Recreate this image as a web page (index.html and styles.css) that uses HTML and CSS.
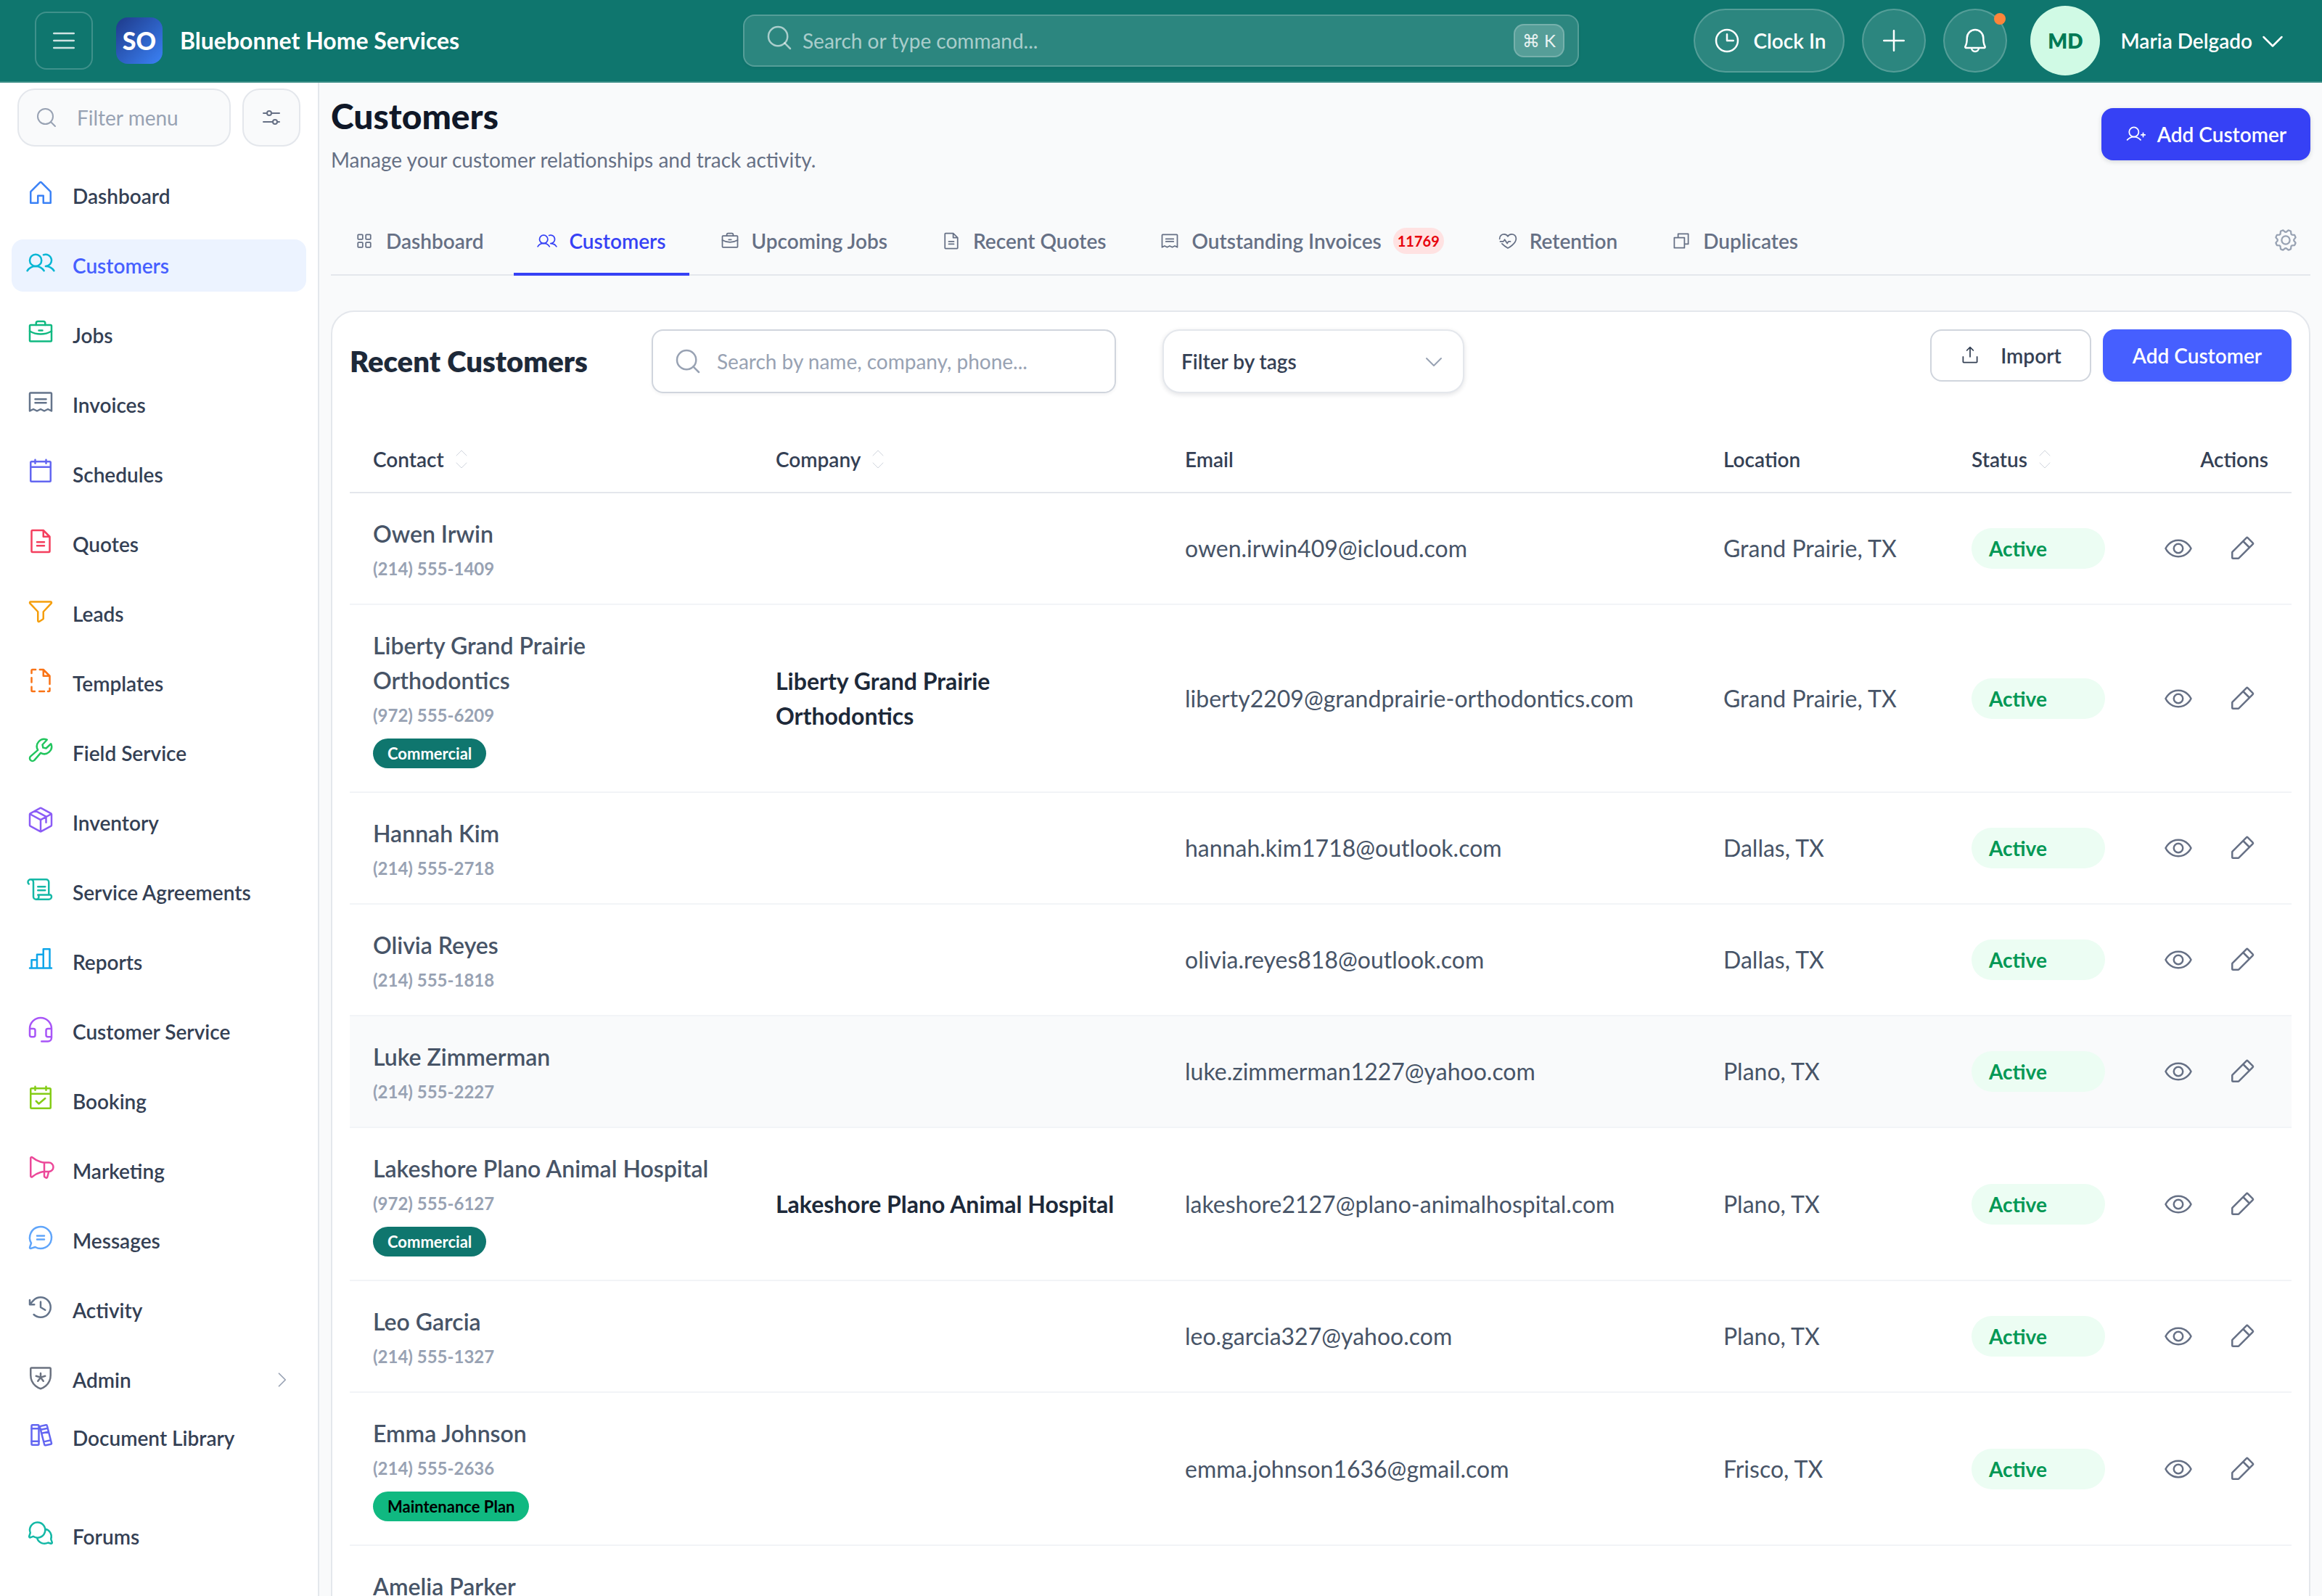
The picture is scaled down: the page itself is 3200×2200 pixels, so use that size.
FILE: index.html
```html
<!DOCTYPE html>
<html lang="en">
<head>
<meta charset="utf-8">
<meta name="viewport" content="width=device-width, initial-scale=1">
<title>Customers</title>
<link rel="stylesheet" href="styles.css">
</head>
<body>
<svg class="sprite" aria-hidden="true">
  <symbol id="list" viewBox="0 0 256 256"><path d="M40,64H216M40,128H216M40,192H216"/></symbol>
  <symbol id="search" viewBox="0 0 256 256"><circle cx="116" cy="116" r="84"/><path d="M175.4,175.4L224,224"/></symbol>
  <symbol id="clock" viewBox="0 0 256 256"><circle cx="128" cy="128" r="96"/><path d="M128,72V128H184"/></symbol>
  <symbol id="plus" viewBox="0 0 256 256"><path d="M40,128H216M128,40V216"/></symbol>
  <symbol id="bell" viewBox="0 0 256 256"><path d="M96,192a32,32,0,0,0,64,0M56,104a72,72,0,0,1,144,0c0,35.82,8.3,64.6,14.9,76A8,8,0,0,1,208,192H48a8,8,0,0,1-6.88-12C47.71,168.6,56,139.81,56,104Z"/></symbol>
  <symbol id="caret-down" viewBox="0 0 256 256"><path d="M208,96L128,176L48,96"/></symbol>
  <symbol id="caret-right" viewBox="0 0 256 256"><path d="M96,48L176,128L96,208"/></symbol>
  <symbol id="sliders" viewBox="0 0 256 256"><circle cx="104" cy="80" r="24"/><circle cx="168" cy="176" r="24"/><path d="M128,80H216M40,80H80M192,176H216M40,176H144"/></symbol>
  <symbol id="house" viewBox="0 0 256 256"><path d="M104,216V152h48v64h64V120a8,8,0,0,0-2.34-5.66l-80-80a8,8,0,0,0-11.32,0l-80,80A8,8,0,0,0,40,120v96Z"/></symbol>
  <symbol id="users" viewBox="0 0 256 256"><circle cx="84" cy="108" r="52"/><path d="M10.23,200a88,88,0,0,1,147.54,0M172,160a87.93,87.93,0,0,1,73.77,40M152.69,59.7A52,52,0,1,1,172,160"/></symbol>
  <symbol id="briefcase" viewBox="0 0 256 256"><rect x="32" y="64" width="192" height="144" rx="8"/><path d="M168,64V48a16,16,0,0,0-16-16H104A16,16,0,0,0,88,48V64M224,118.31A191.09,191.09,0,0,1,128,144a191.14,191.14,0,0,1-96-25.68M112,112h32"/></symbol>
  <symbol id="receipt" viewBox="0 0 256 256"><path d="M32,208V56a8,8,0,0,1,8-8H216a8,8,0,0,1,8,8V208l-32-16-32,16-32-16L96,208,64,192ZM80,104H176M80,136H176"/></symbol>
  <symbol id="calendar" viewBox="0 0 256 256"><rect x="40" y="40" width="176" height="176" rx="8"/><path d="M176,24V56M80,24V56M40,88H216"/></symbol>
  <symbol id="file-text" viewBox="0 0 256 256"><path d="M200,224H56a8,8,0,0,1-8-8V40a8,8,0,0,1,8-8h96l56,56V216A8,8,0,0,1,200,224ZM152,32V88H208M96,136H160M96,168H160"/></symbol>
  <symbol id="funnel" viewBox="0 0 256 256"><path d="M34.1,61.38A8,8,0,0,1,40,48H216a8,8,0,0,1,5.92,13.38L152,136v58.65a8,8,0,0,1-3.56,6.66l-32,21.33A8,8,0,0,1,104,216V136Z"/></symbol>
  <symbol id="file-dashed" viewBox="0 0 256 256"><path d="M84,32H56a8,8,0,0,0-8,8V64M48,104V144M48,184v32a8,8,0,0,0,8,8H76M116,224H160M192,224h8a8,8,0,0,0,8-8V196M208,160V88L152,32H120M152,32V88H208"/></symbol>
  <symbol id="wrench" viewBox="0 0 256 256"><path d="M219.3,72a64,64,0,0,1-90.6,80.6L73,217a24,24,0,0,1-34-34l64.4-55.7A64,64,0,0,1,184,36.7L144,80l5.66,26.34L176,112Z"/></symbol>
  <symbol id="package" viewBox="0 0 256 256"><path d="M219.84,182.84l-88,48.18a8,8,0,0,1-7.68,0l-88-48.18a8,8,0,0,1-4.16-7V80.18a8,8,0,0,1,4.16-7l88-48.18a8,8,0,0,1,7.68,0l88,48.18a8,8,0,0,1,4.16,7v95.64A8,8,0,0,1,219.84,182.84ZM32.7,76.92L128,129.08L223.3,76.92M128,129V232M81.56,48.31L176,100V152"/></symbol>
  <symbol id="scroll" viewBox="0 0 256 256"><path d="M104,104H168M104,136H168M200,176V64a24,24,0,0,0-24-24H40M88,216a24,24,0,0,0,24-24c0-10-8-16-8-16H216s8,6,8,16a24,24,0,0,1-24,24H88a24,24,0,0,1-24-24V64a24,24,0,0,0-48,0c0,10,8,16,8,16"/></symbol>
  <symbol id="chart-bar" viewBox="0 0 256 256"><path d="M32,208H224M48,208V136H96M96,208V88h56M152,208V40h56V208"/></symbol>
  <symbol id="headset" viewBox="0 0 256 256"><path d="M224,200v8a32,32,0,0,1-32,32H136M224,128H192a16,16,0,0,0-16,16v40a16,16,0,0,0,16,16h32V128a96,96,0,1,0-192,0v56a16,16,0,0,0,16,16H64a16,16,0,0,0,16-16V144a16,16,0,0,0-16-16H32"/></symbol>
  <symbol id="calendar-check" viewBox="0 0 256 256"><rect x="40" y="40" width="176" height="176" rx="8"/><path d="M176,24V56M80,24V56M40,88H216M88,152L112,176L168,128"/></symbol>
  <symbol id="megaphone" viewBox="0 0 256 256"><path d="M160,80V200.67a8,8,0,0,0,3.56,6.65l11,7.33a8,8,0,0,0,12.2-4.72L200,160M40,200a8,8,0,0,0,13.15,6.12C105.55,162.16,160,160,160,160h40a40,40,0,0,0,0-80H160S105.55,77.84,53.15,33.89A8,8,0,0,0,40,40Z"/></symbol>
  <symbol id="chat" viewBox="0 0 256 256"><path d="M79.93,211.11a96,96,0,1,0-35-35L32.42,213.46a8,8,0,0,0,10.12,10.12ZM96,112H160M96,144H160"/></symbol>
  <symbol id="history" viewBox="0 0 256 256"><path d="M128,80V128L168,152M72,104H32V64M67.6,192A88,88,0,1,0,65.77,65.77C54,77.69,44.28,88.93,32,104"/></symbol>
  <symbol id="shield" viewBox="0 0 256 256"><path d="M216,112V56a8,8,0,0,0-8-8H48a8,8,0,0,0-8,8v56c0,96,88,120,88,120S216,208,216,112ZM128,132V96M128,132L88,120M128,132L168,120M128,132L104,164M128,132L152,164"/></symbol>
  <symbol id="books" viewBox="0 0 256 256"><rect x="48" y="40" width="64" height="176" rx="8"/><path d="M48,72H112M48,184H112M128.2,50.4l47-10.1a8,8,0,0,1,9.5,6.1L223.8,199.6a8,8,0,0,1-6.1,9.5l-47,10.1a8,8,0,0,1-9.5-6.1L122.1,59.9a8,8,0,0,1,6.1-9.5ZM128,82L190,69M135,114L198,100M154,188L217,174"/></symbol>
  <symbol id="chats" viewBox="0 0 256 256"><path d="M62,152.5A68,68,0,1,0,37,121L27,152a8,8,0,0,0,10,10ZM170,88A68,68,0,0,1,219,177L229,206a8,8,0,0,1-10,10L194,208A68,68,0,0,1,98,172"/></symbol>
  <symbol id="squares" viewBox="0 0 256 256"><rect x="48" y="48" width="60" height="60" rx="8"/><rect x="148" y="48" width="60" height="60" rx="8"/><rect x="48" y="148" width="60" height="60" rx="8"/><rect x="148" y="148" width="60" height="60" rx="8"/></symbol>
  <symbol id="heartbeat" viewBox="0 0 256 256"><path d="M24,104C22,66,50,44,80,44c22,0,40,10,48,28c8-18,26-28,48-28c30,0,56,22,56,56C232,166,128,220,128,220S84,196,54,164M32,136H72L88,112L120,160L136,136H160"/></symbol>
  <symbol id="copy" viewBox="0 0 256 256"><path d="M168,168H216V40H88V88M40,88H168V216H40Z"/></symbol>
  <symbol id="gear" viewBox="0 0 256 256"><circle cx="128" cy="128" r="40"/><path d="M41.43,178.09A99.14,99.14,0,0,1,31.36,153.8l16.78-21a81.59,81.59,0,0,1,0-9.64l-16.77-21a99.43,99.43,0,0,1,10.05-24.3l26.71-3a81,81,0,0,1,6.81-6.81l3-26.7A99.14,99.14,0,0,1,102.2,31.36l21,16.78a81.59,81.59,0,0,1,9.64,0l21-16.77a99.43,99.43,0,0,1,24.3,10.05l3,26.71a81,81,0,0,1,6.81,6.81l26.7,3a99.14,99.14,0,0,1,10.07,24.29l-16.78,21a81.59,81.59,0,0,1,0,9.64l16.77,21a99.43,99.43,0,0,1-10,24.3l-26.71,3a81,81,0,0,1-6.81,6.81l-3,26.7a99.14,99.14,0,0,1-24.29,10.07l-21-16.78a81.59,81.59,0,0,1-9.64,0l-21,16.77a99.43,99.43,0,0,1-24.3-10l-3-26.71a81,81,0,0,1-6.81-6.81Z"/></symbol>
  <symbol id="user-plus" viewBox="0 0 256 256"><circle cx="108" cy="100" r="60"/><path d="M24,200c20.55-24.45,49.56-40,84-40s63.45,15.55,84,40M200,136H248M224,112V160"/></symbol>
  <symbol id="upload" viewBox="0 0 256 256"><path d="M216,144v64a8,8,0,0,1-8,8H48a8,8,0,0,1-8-8V144M88,64L128,24L168,64M128,24V144"/></symbol>
  <symbol id="sort" viewBox="0 0 16 26"><path d="M1,8L8,1L15,8M1,18L8,25L15,18"/></symbol>
  <symbol id="eye" viewBox="0 0 256 256"><path d="M128,56C48,56,16,128,16,128s32,72,112,72,112-72,112-72S208,56,128,56Z"/><circle cx="128" cy="128" r="40"/></symbol>
  <symbol id="pencil" viewBox="0 0 256 256"><path d="M92.69,216H48a8,8,0,0,1-8-8V163.31a8,8,0,0,1,2.34-5.65L165.66,34.34a8,8,0,0,1,11.31,0L221.66,79a8,8,0,0,1,0,11.31L98.34,213.66A8,8,0,0,1,92.69,216ZM136,64L192,120"/></symbol>
</svg>

<div class="app">
  <header class="topbar">
    <div class="topbar-left">
      <button class="menu-toggle" type="button" aria-label="Toggle menu"><svg class="icon icon-40"><use href="#list"/></svg></button>
      <a class="brand" href="#"><span class="brand-logo">SO</span><span class="brand-name">Bluebonnet Home Services</span></a>
    </div>
    <label class="command">
      <svg class="icon icon-40 command-icon"><use href="#search"/></svg>
      <input class="command-input" type="text" aria-label="Search or type command" placeholder="Search or type command...">
      <kbd class="command-key">⌘ K</kbd>
    </label>
    <div class="topbar-right">
      <button class="pill pill-text" type="button"><svg class="icon icon-40"><use href="#clock"/></svg>Clock In</button>
      <button class="pill" type="button" aria-label="Create"><svg class="icon icon-40"><use href="#plus"/></svg></button>
      <button class="pill" type="button" aria-label="Notifications"><svg class="icon icon-40"><use href="#bell"/></svg><span class="pill-dot"></span></button>
      <button class="profile" type="button"><span class="avatar">MD</span><span class="profile-name">Maria Delgado</span><svg class="icon icon-40"><use href="#caret-down"/></svg></button>
    </div>
  </header>

  <div class="body">
    <aside class="sidebar">
      <div class="sidebar-filter">
        <label class="menu-filter"><svg class="icon icon-32"><use href="#search"/></svg><input class="menu-filter-input" type="text" aria-label="Filter menu" placeholder="Filter menu"></label>
        <button class="filter-button" type="button" aria-label="Menu options"><svg class="icon icon-32"><use href="#sliders"/></svg></button>
      </div>
      <nav class="menu" aria-label="Main">
        <ul class="menu-list">
          <li><a class="menu-item" href="#"><svg class="icon icon-40 c-blue"><use href="#house"/></svg>Dashboard</a></li>
          <li><a class="menu-item menu-item-active" href="#" aria-current="page"><svg class="icon icon-40 c-cyan"><use href="#users"/></svg>Customers</a></li>
          <li><a class="menu-item" href="#"><svg class="icon icon-40 c-emerald"><use href="#briefcase"/></svg>Jobs</a></li>
          <li><a class="menu-item" href="#"><svg class="icon icon-40 c-slate"><use href="#receipt"/></svg>Invoices</a></li>
          <li><a class="menu-item" href="#"><svg class="icon icon-40 c-indigo"><use href="#calendar"/></svg>Schedules</a></li>
          <li><a class="menu-item" href="#"><svg class="icon icon-40 c-rose"><use href="#file-text"/></svg>Quotes</a></li>
          <li><a class="menu-item" href="#"><svg class="icon icon-40 c-amber"><use href="#funnel"/></svg>Leads</a></li>
          <li><a class="menu-item" href="#"><svg class="icon icon-40 c-orange"><use href="#file-dashed"/></svg>Templates</a></li>
          <li><a class="menu-item" href="#"><svg class="icon icon-40 c-green"><use href="#wrench"/></svg>Field Service</a></li>
          <li><a class="menu-item" href="#"><svg class="icon icon-40 c-violet"><use href="#package"/></svg>Inventory</a></li>
          <li><a class="menu-item" href="#"><svg class="icon icon-40 c-teal"><use href="#scroll"/></svg>Service Agreements</a></li>
          <li><a class="menu-item" href="#"><svg class="icon icon-40 c-sky"><use href="#chart-bar"/></svg>Reports</a></li>
          <li><a class="menu-item" href="#"><svg class="icon icon-40 c-purple"><use href="#headset"/></svg>Customer Service</a></li>
          <li><a class="menu-item" href="#"><svg class="icon icon-40 c-lime"><use href="#calendar-check"/></svg>Booking</a></li>
          <li><a class="menu-item" href="#"><svg class="icon icon-40 c-pink"><use href="#megaphone"/></svg>Marketing</a></li>
          <li><a class="menu-item" href="#"><svg class="icon icon-40 c-lightblue"><use href="#chat"/></svg>Messages</a></li>
          <li><a class="menu-item" href="#"><svg class="icon icon-40 c-slate"><use href="#history"/></svg>Activity</a></li>
          <li><a class="menu-item" href="#"><svg class="icon icon-40 c-gray"><use href="#shield"/></svg>Admin<svg class="icon icon-28 menu-caret"><use href="#caret-right"/></svg></a></li>
        </ul>
        <ul class="menu-list menu-list-library">
          <li><a class="menu-item" href="#"><svg class="icon icon-40 c-indigo"><use href="#books"/></svg>Document Library</a></li>
        </ul>
        <ul class="menu-list menu-list-community">
          <li><a class="menu-item" href="#"><svg class="icon icon-40 c-teal"><use href="#chats"/></svg>Forums</a></li>
        </ul>
      </nav>
    </aside>

    <main class="main">
      <div class="page-head">
        <div>
          <h1 class="page-title">Customers</h1>
          <p class="page-subtitle">Manage your customer relationships and track activity.</p>
        </div>
        <button class="button button-deep" type="button"><svg class="icon icon-28"><use href="#user-plus"/></svg>Add Customer</button>
      </div>

      <nav class="tabs" aria-label="Customer views">
        <a class="tab" href="#"><svg class="icon icon-28"><use href="#squares"/></svg>Dashboard</a>
        <a class="tab tab-active" href="#" aria-current="page"><svg class="icon icon-28"><use href="#users"/></svg>Customers</a>
        <a class="tab" href="#"><svg class="icon icon-28"><use href="#briefcase"/></svg>Upcoming Jobs</a>
        <a class="tab" href="#"><svg class="icon icon-28"><use href="#file-text"/></svg>Recent Quotes</a>
        <a class="tab" href="#"><svg class="icon icon-28"><use href="#receipt"/></svg>Outstanding Invoices<span class="tab-count">11769</span></a>
        <a class="tab" href="#"><svg class="icon icon-28"><use href="#heartbeat"/></svg>Retention</a>
        <a class="tab" href="#"><svg class="icon icon-28"><use href="#copy"/></svg>Duplicates</a>
        <button class="tabs-settings" type="button" aria-label="Tab settings"><svg class="icon icon-36"><use href="#gear"/></svg></button>
      </nav>

      <section class="card">
        <div class="toolbar">
          <h2 class="card-title">Recent Customers</h2>
          <label class="search"><svg class="icon icon-40"><use href="#search"/></svg><input class="search-input" type="text" aria-label="Search customers" placeholder="Search by name, company, phone..."></label>
          <div class="tag-filter">
            <select class="tag-select" aria-label="Filter by tags"><option>Filter by tags</option></select>
            <svg class="icon icon-32 tag-caret"><use href="#caret-down"/></svg>
          </div>
          <div class="toolbar-actions">
            <button class="button button-outline" type="button"><svg class="icon icon-28"><use href="#upload"/></svg>Import</button>
            <button class="button button-primary" type="button">Add Customer</button>
          </div>
        </div>

        <table class="table">
          <colgroup><col class="col-contact"><col class="col-company"><col class="col-email"><col class="col-location"><col class="col-status"><col class="col-actions"></colgroup>
          <thead>
            <tr>
              <th scope="col"><button class="sort" type="button">Contact<svg class="icon sort-icon"><use href="#sort"/></svg></button></th>
              <th scope="col"><button class="sort" type="button">Company<svg class="icon sort-icon"><use href="#sort"/></svg></button></th>
              <th scope="col">Email</th>
              <th scope="col">Location</th>
              <th scope="col"><button class="sort" type="button">Status<svg class="icon sort-icon"><use href="#sort"/></svg></button></th>
              <th class="align-right" scope="col">Actions</th>
            </tr>
          </thead>
          <tbody>
            <tr>
              <td class="contact"><div class="name">Owen Irwin</div><div class="phone">(214) 555-1409</div></td>
              <td class="company"></td>
              <td>owen.irwin409@icloud.com</td>
              <td>Grand Prairie, TX</td>
              <td><span class="status">Active</span></td>
              <td><div class="actions"><button class="action" type="button" aria-label="View"><svg class="icon icon-40"><use href="#eye"/></svg></button><button class="action" type="button" aria-label="Edit"><svg class="icon icon-40"><use href="#pencil"/></svg></button></div></td>
            </tr>
            <tr>
              <td class="contact"><div class="name">Liberty Grand Prairie Orthodontics</div><div class="phone">(972) 555-6209</div><span class="tag tag-commercial">Commercial</span></td>
              <td class="company">Liberty Grand Prairie Orthodontics</td>
              <td>liberty2209@grandprairie-orthodontics.com</td>
              <td>Grand Prairie, TX</td>
              <td><span class="status">Active</span></td>
              <td><div class="actions"><button class="action" type="button" aria-label="View"><svg class="icon icon-40"><use href="#eye"/></svg></button><button class="action" type="button" aria-label="Edit"><svg class="icon icon-40"><use href="#pencil"/></svg></button></div></td>
            </tr>
            <tr>
              <td class="contact"><div class="name">Hannah Kim</div><div class="phone">(214) 555-2718</div></td>
              <td class="company"></td>
              <td>hannah.kim1718@outlook.com</td>
              <td>Dallas, TX</td>
              <td><span class="status">Active</span></td>
              <td><div class="actions"><button class="action" type="button" aria-label="View"><svg class="icon icon-40"><use href="#eye"/></svg></button><button class="action" type="button" aria-label="Edit"><svg class="icon icon-40"><use href="#pencil"/></svg></button></div></td>
            </tr>
            <tr>
              <td class="contact"><div class="name">Olivia Reyes</div><div class="phone">(214) 555-1818</div></td>
              <td class="company"></td>
              <td>olivia.reyes818@outlook.com</td>
              <td>Dallas, TX</td>
              <td><span class="status">Active</span></td>
              <td><div class="actions"><button class="action" type="button" aria-label="View"><svg class="icon icon-40"><use href="#eye"/></svg></button><button class="action" type="button" aria-label="Edit"><svg class="icon icon-40"><use href="#pencil"/></svg></button></div></td>
            </tr>
            <tr class="row-hover">
              <td class="contact"><div class="name">Luke Zimmerman</div><div class="phone">(214) 555-2227</div></td>
              <td class="company"></td>
              <td>luke.zimmerman1227@yahoo.com</td>
              <td>Plano, TX</td>
              <td><span class="status">Active</span></td>
              <td><div class="actions"><button class="action" type="button" aria-label="View"><svg class="icon icon-40"><use href="#eye"/></svg></button><button class="action" type="button" aria-label="Edit"><svg class="icon icon-40"><use href="#pencil"/></svg></button></div></td>
            </tr>
            <tr>
              <td class="contact"><div class="name">Lakeshore Plano Animal Hospital</div><div class="phone">(972) 555-6127</div><span class="tag tag-commercial">Commercial</span></td>
              <td class="company">Lakeshore Plano Animal Hospital</td>
              <td>lakeshore2127@plano-animalhospital.com</td>
              <td>Plano, TX</td>
              <td><span class="status">Active</span></td>
              <td><div class="actions"><button class="action" type="button" aria-label="View"><svg class="icon icon-40"><use href="#eye"/></svg></button><button class="action" type="button" aria-label="Edit"><svg class="icon icon-40"><use href="#pencil"/></svg></button></div></td>
            </tr>
            <tr>
              <td class="contact"><div class="name">Leo Garcia</div><div class="phone">(214) 555-1327</div></td>
              <td class="company"></td>
              <td>leo.garcia327@yahoo.com</td>
              <td>Plano, TX</td>
              <td><span class="status">Active</span></td>
              <td><div class="actions"><button class="action" type="button" aria-label="View"><svg class="icon icon-40"><use href="#eye"/></svg></button><button class="action" type="button" aria-label="Edit"><svg class="icon icon-40"><use href="#pencil"/></svg></button></div></td>
            </tr>
            <tr>
              <td class="contact"><div class="name">Emma Johnson</div><div class="phone">(214) 555-2636</div><span class="tag tag-plan">Maintenance Plan</span></td>
              <td class="company"></td>
              <td>emma.johnson1636@gmail.com</td>
              <td>Frisco, TX</td>
              <td><span class="status">Active</span></td>
              <td><div class="actions"><button class="action" type="button" aria-label="View"><svg class="icon icon-40"><use href="#eye"/></svg></button><button class="action" type="button" aria-label="Edit"><svg class="icon icon-40"><use href="#pencil"/></svg></button></div></td>
            </tr>
            <tr>
              <td class="contact"><div class="name">Amelia Parker</div></td>
              <td class="company"></td>
              <td></td>
              <td></td>
              <td></td>
              <td></td>
            </tr>
          </tbody>
        </table>
      </section>
    </main>
  </div>
</div>
</body>
</html>
```
FILE: styles.css
```css
* { box-sizing: border-box; }

body {
  margin: 0;
  background: #f9fafb;
  color: #344054;
  font-family: Lato, "Noto Sans", sans-serif;
  font-size: 28px;
  line-height: 40px;
}

button, input, select { font: inherit; color: inherit; }
button { padding: 0; border: 0; background: none; cursor: pointer; }
input { min-width: 0; padding: 0; border: 0; outline: 0; background: none; }
a { color: inherit; text-decoration: none; }
h1, h2, p, ul { margin: 0; padding: 0; }
ul { list-style: none; }

.sprite { display: none; }
.icon {
  flex: none;
  fill: none;
  stroke: currentColor;
  stroke-width: 16;
  stroke-linecap: round;
  stroke-linejoin: round;
}
.icon-28 { width: 28px; height: 28px; }
.icon-32 { width: 32px; height: 32px; }
.icon-36 { width: 36px; height: 36px; }
.icon-40 { width: 40px; height: 40px; }

.app { display: flex; flex-direction: column; height: 100vh; overflow: hidden; }
.body { display: flex; flex: 1; min-height: 0; }

/* Top bar */
.topbar {
  display: grid;
  grid-template-columns: 1fr minmax(0, 1152px) 1fr;
  align-items: center;
  flex: none;
  height: 114px;
  padding: 0 48px;
  border-bottom: 2px solid #3a8d86;
  background: #0f766e;
  color: #fff;
}
.topbar-left { display: flex; align-items: center; gap: 32px; }
.menu-toggle {
  display: grid;
  place-items: center;
  width: 80px;
  height: 80px;
  border: 2px solid rgba(255, 255, 255, .2);
  border-radius: 16px;
  color: rgba(255, 255, 255, .8);
}
.brand { display: flex; align-items: center; gap: 24px; }
.brand-logo {
  display: grid;
  place-items: center;
  width: 64px;
  height: 64px;
  border-radius: 16px;
  background: linear-gradient(135deg, #1e3a8a, #3b82f6);
  font-size: 34px;
  font-weight: 900;
}
.brand-name { font-size: 32px; font-weight: 700; white-space: nowrap; }
.command {
  display: flex;
  align-items: center;
  gap: 12px;
  height: 72px;
  padding: 0 18px 0 28px;
  border: 2px solid rgba(255, 255, 255, .2);
  border-radius: 16px;
  background: rgba(255, 255, 255, .12);
  box-shadow: 0 2px 4px rgba(16, 24, 40, .05);
}
.command-icon { margin-bottom: 8px; color: rgba(255, 255, 255, .6); }
.command-input { flex: 1; }
.command-input::placeholder { color: rgba(255, 255, 255, .6); opacity: 1; }
.command-key {
  padding: 2px 10px;
  border: 2px solid rgba(255, 255, 255, .2);
  border-radius: 14px;
  background: rgba(255, 255, 255, .2);
  color: rgba(255, 255, 255, .9);
  font-family: Lato, "DejaVu Sans", sans-serif;
  font-size: 24px;
  line-height: 38px;
}
.topbar-right { display: flex; align-items: center; justify-content: flex-end; gap: 24px; }
.pill {
  position: relative;
  display: flex;
  align-items: center;
  justify-content: center;
  gap: 16px;
  width: 88px;
  height: 88px;
  border: 2px solid rgba(255, 255, 255, .2);
  border-radius: 44px;
  background: rgba(255, 255, 255, .12);
  font-weight: 600;
  white-space: nowrap;
}
.pill-text { width: 208px; }
.pill-dot {
  position: absolute;
  top: 4px;
  right: 0;
  width: 16px;
  height: 16px;
  border-radius: 50%;
  background: #fd853a;
}
.profile { display: flex; align-items: center; gap: 8px; margin-left: 8px; font-weight: 600; white-space: nowrap; }
.profile-name { margin-left: 20px; }
.avatar {
  display: grid;
  place-items: center;
  width: 96px;
  height: 96px;
  border-radius: 50%;
  background: #d0fae5;
  color: #007a55;
  font-weight: 800;
}

/* Sidebar */
.sidebar {
  flex: none;
  width: 440px;
  padding: 8px 16px;
  border-right: 2px solid #e4e7ec;
  background: #fff;
  overflow: hidden;
}
.sidebar-filter { display: flex; gap: 16px; padding: 0 8px; }
.menu-filter {
  display: flex;
  flex: 1;
  align-items: center;
  gap: 26px;
  min-width: 0;
  height: 80px;
  padding: 0 22px;
  border: 2px solid #e4e7ec;
  border-radius: 24px;
  background: #f9fafb;
  color: #98a2b3;
}
.menu-filter-input { width: 100%; }
.menu-filter-input::placeholder { color: #98a2b3; opacity: 1; }
.filter-button {
  display: grid;
  place-items: center;
  width: 80px;
  height: 80px;
  border: 2px solid #e4e7ec;
  border-radius: 24px;
  background: #f9fafb;
  color: #667085;
}
.menu { margin-top: 32px; }
.menu-list { display: flex; flex-direction: column; gap: 24px; }
.menu-list-library { margin-top: 8px; }
.menu-list-community { margin-top: 64px; }
.menu-item {
  display: flex;
  align-items: center;
  gap: 24px;
  height: 72px;
  padding: 0 20px;
  border-radius: 16px;
  font-weight: 600;
  white-space: nowrap;
}
.menu-item .icon-40 { margin-bottom: 8px; }
.menu-item-active { background: #ecf3ff; color: #465fff; }
.menu-caret { margin-left: auto; color: #98a2b3; }

.c-blue { color: #3b82f6; }
.c-cyan { color: #06b6d4; }
.c-emerald { color: #10b981; }
.c-slate { color: #64748b; }
.c-gray { color: #6b7280; }
.c-indigo { color: #6366f1; }
.c-rose { color: #f43f5e; }
.c-amber { color: #f59e0b; }
.c-orange { color: #f97316; }
.c-green { color: #22c55e; }
.c-violet { color: #8b5cf6; }
.c-teal { color: #14b8a6; }
.c-sky { color: #0ea5e9; }
.c-purple { color: #a855f7; }
.c-lime { color: #84cc16; }
.c-pink { color: #ec4899; }
.c-lightblue { color: #60a5fa; }

/* Page */
.main { flex: 1; min-width: 0; padding: 16px 16px 0; overflow: hidden; }
.page-head { display: flex; align-items: center; justify-content: space-between; }
.page-title { color: #101828; font-size: 48px; font-weight: 900; line-height: 60px; }
.page-subtitle { margin-top: 10px; color: #667085; }

.button {
  display: flex;
  align-items: center;
  justify-content: center;
  height: 72px;
  border-radius: 16px;
  font-weight: 600;
  white-space: nowrap;
}
.button-deep { gap: 16px; width: 288px; background: #3641f5; color: #fff; box-shadow: 0 2px 6px rgba(16, 24, 40, .15); }
.button-primary { width: 260px; background: #465fff; color: #fff; box-shadow: 0 2px 4px rgba(16, 24, 40, .05); }
.button-outline { gap: 28px; width: 222px; border: 2px solid #d0d5dd; background: #fff; }

.tabs {
  display: flex;
  gap: 10px;
  height: 96px;
  margin-top: 44px;
  border-bottom: 2px solid #e4e7ec;
  color: #667085;
}
.tab {
  display: flex;
  align-items: center;
  gap: 16px;
  height: 96px;
  padding: 4px 32px 0;
  border-bottom: 4px solid transparent;
  font-weight: 600;
  white-space: nowrap;
}
.tab-active { border-bottom-color: #3641f5; color: #3641f5; }
.tab-count {
  padding: 0 6px;
  border-radius: 18px;
  background: #ffe2e2;
  color: #e7000b;
  font-size: 20px;
  font-weight: 700;
  line-height: 36px;
}
.tabs-settings { display: grid; place-items: center; margin: 0 16px 0 auto; color: #98a2b3; }

/* Customer list */
.card {
  margin-top: 48px;
  padding: 24px 24px 0;
  border: 2px solid #e4e7ec;
  border-radius: 32px;
  background: #fff;
}
.toolbar { display: flex; gap: 64px; height: 88px; }
.card-title { flex: none; width: 352px; color: #1d2939; font-size: 40px; font-weight: 800; line-height: 88px; white-space: nowrap; }
.search {
  display: flex;
  align-items: center;
  gap: 20px;
  width: 640px;
  padding: 0 28px;
  border: 2px solid #d0d5dd;
  border-radius: 16px;
  box-shadow: 0 2px 4px rgba(16, 24, 40, .05);
  color: #98a2b3;
}
.search-input { flex: 1; }
.search-input::placeholder { color: #98a2b3; opacity: 1; }
.tag-filter { display: grid; align-items: center; width: 416px; }
.tag-select, .tag-caret { grid-area: 1 / 1; }
.tag-select {
  appearance: none;
  width: 100%;
  height: 88px;
  padding: 0 24px;
  border: 2px solid #e4e7ec;
  border-radius: 24px;
  background: #fff;
  box-shadow: 0 2px 6px rgba(16, 24, 40, .12);
  font-weight: 600;
}
.tag-caret { justify-self: end; margin-right: 26px; color: #98a2b3; pointer-events: none; }
.toolbar-actions { display: flex; gap: 16px; margin-left: auto; }

.table { width: 100%; margin-top: 46px; border-collapse: separate; border-spacing: 0; table-layout: fixed; }
.col-contact { width: 555px; }
.col-company { width: 564px; }
.col-email { width: 742px; }
.col-location { width: 342px; }
.col-status { width: 248px; }
.col-actions { width: 225px; }
.table th {
  height: 92px;
  padding: 0 32px;
  border-bottom: 2px solid #e4e7ec;
  font-weight: 600;
  text-align: left;
}
.table .align-right { text-align: right; }
.sort { display: flex; align-items: center; gap: 16px; font-weight: 600; }
.sort-icon { width: 16px; height: 26px; stroke-width: 1; color: #d0d5dd; }
.table td {
  padding: 32px;
  border-bottom: 2px solid #f2f4f7;
  color: #475467;
  font-size: 32px;
  line-height: 48px;
}
.row-hover { background: #f9fafb; }
.name { font-weight: 600; }
.phone { margin-top: 8px; color: #98a2b3; font-size: 24px; font-weight: 700; line-height: 32px; }
.table .contact, .table .company { padding-right: 48px; }
.table .company { color: #1d2939; font-weight: 700; }
.tag {
  display: block;
  width: fit-content;
  margin-top: 16px;
  padding: 0 20px;
  border-radius: 21px;
  font-size: 22px;
  font-weight: 700;
  line-height: 41px;
}
.tag-commercial { background: #0f766e; color: #fff; }
.tag-plan { background: #10b981; color: #000; }
.status {
  display: block;
  padding: 0 24px;
  border-radius: 28px;
  background: #ecfdf3;
  color: #039855;
  font-size: 28px;
  font-weight: 700;
  line-height: 56px;
}
.actions { display: flex; justify-content: flex-end; gap: 16px; }
.action { display: grid; place-items: center; width: 72px; height: 72px; color: #667085; }
```
